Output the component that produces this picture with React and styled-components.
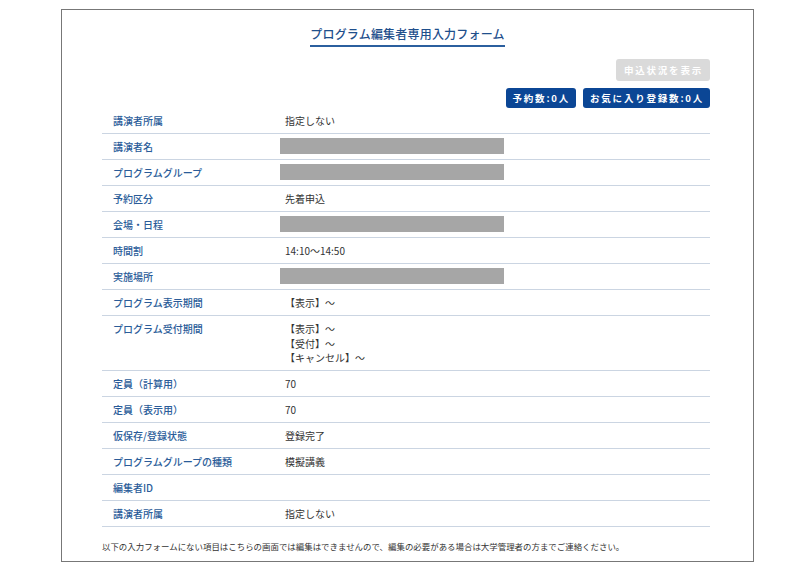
import React from "react"
import styled, { createGlobalStyle } from "styled-components"

const GlobalStyle = createGlobalStyle`
  body {
    margin: 0;
    background: #fff;
    font-family: "Noto Sans CJK JP", "Noto Sans", sans-serif;
  }
`

const Frame = styled.div`
  box-sizing: border-box;
  margin: 9px 0 0 61px;
  width: 693px;
  height: 553px;
  border: 1.5px solid #777;
  padding: 16px 43px 0 40px;
  display: flex;
  flex-direction: column;
`

const TitleWrap = styled.div`
  display: flex;
  justify-content: center;
  padding-left: 3px;
`

const Title = styled.h1`
  margin: 0;
  padding: 0 0 3px;
  font-size: 12px;
  line-height: 16px;
  font-weight: 500;
  color: #1f4f8c;
  border-bottom: 2px solid #2b5f9e;
  letter-spacing: 0.2px;
`

const ButtonRow = styled.div`
  display: flex;
  justify-content: flex-end;
  gap: 7px;
  margin-top: ${p => p.$top}px;
`

const Button = styled.button`
  box-sizing: border-box;
  height: ${p => p.$h}px;
  padding: 0 ${p => p.$pad - 1}px 0 ${p => p.$pad}px;
  border: none;
  border-radius: 3px;
  font-family: inherit;
  font-size: 9.5px;
  font-weight: 700;
  letter-spacing: 1.8px;
  color: #fff;
  background: ${p => (p.disabled ? "#dadada" : "#0b4695")};
`

const Table = styled.div`
  margin-top: 0;
`

const Row = styled.div`
  display: grid;
  grid-template-columns: 178px 1fr;
  border-bottom: 1px solid #cbd5e2;
  padding: 6px 0 4.5px;
  font-size: 10px;
  line-height: 14.5px;
`

const Label = styled.div`
  padding-left: 11px;
  color: #2a5c99;
  font-weight: 500;
`

const Value = styled.div`
  padding-left: 5px;
  color: #333;
`

const Masked = styled.div`
  width: 224px;
  height: 16px;
  margin-top: -2px;
  background: #a6a6a6;
`

const Note = styled.p`
  margin: 13px 0 0;
  font-size: 8.45px;
  line-height: 12px;
  color: #333;
`

const rows = [
  { label: "講演者所属", value: "指定しない" },
  { label: "講演者名", masked: true },
  { label: "プログラムグループ", masked: true },
  { label: "予約区分", value: "先着申込" },
  { label: "会場・日程", masked: true },
  { label: "時間割", value: "14:10〜14:50" },
  { label: "実施場所", masked: true },
  { label: "プログラム表示期間", value: "【表示】〜" },
  { label: "プログラム受付期間", lines: ["【表示】〜", "【受付】〜", "【キャンセル】〜"] },
  { label: "定員（計算用）", value: "70" },
  { label: "定員（表示用）", value: "70" },
  { label: "仮保存/登録状態", value: "登録完了" },
  { label: "プログラムグループの種類", value: "模擬講義" },
  { label: "編集者ID", value: "" },
  { label: "講演者所属", value: "指定しない" },
]

export default function App() {
  return (
    <>
      <GlobalStyle />
      <Frame>
        <TitleWrap>
          <Title>プログラム編集者専用入力フォーム</Title>
        </TitleWrap>
        <ButtonRow $top={12}>
          <Button disabled $h={22} $pad={8}>申込状況を表示</Button>
        </ButtonRow>
        <ButtonRow $top={7}>
          <Button $h={20} $pad={7}>予約数:0人</Button>
          <Button $h={20} $pad={7}>お気に入り登録数:0人</Button>
        </ButtonRow>
        <Table>
          {rows.map((r, i) => (
            <Row key={i}>
              <Label>{r.label}</Label>
              {r.masked ? (
                <Masked />
              ) : r.lines ? (
                <Value>
                  {r.lines.map(l => (
                    <div key={l}>{l}</div>
                  ))}
                </Value>
              ) : (
                <Value>{r.value}</Value>
              )}
            </Row>
          ))}
        </Table>
        <Note>
          以下の入力フォームにない項目はこちらの画面では編集はできませんので、編集の必要がある場合は大学管理者の方までご連絡ください。
        </Note>
      </Frame>
    </>
  )
}
